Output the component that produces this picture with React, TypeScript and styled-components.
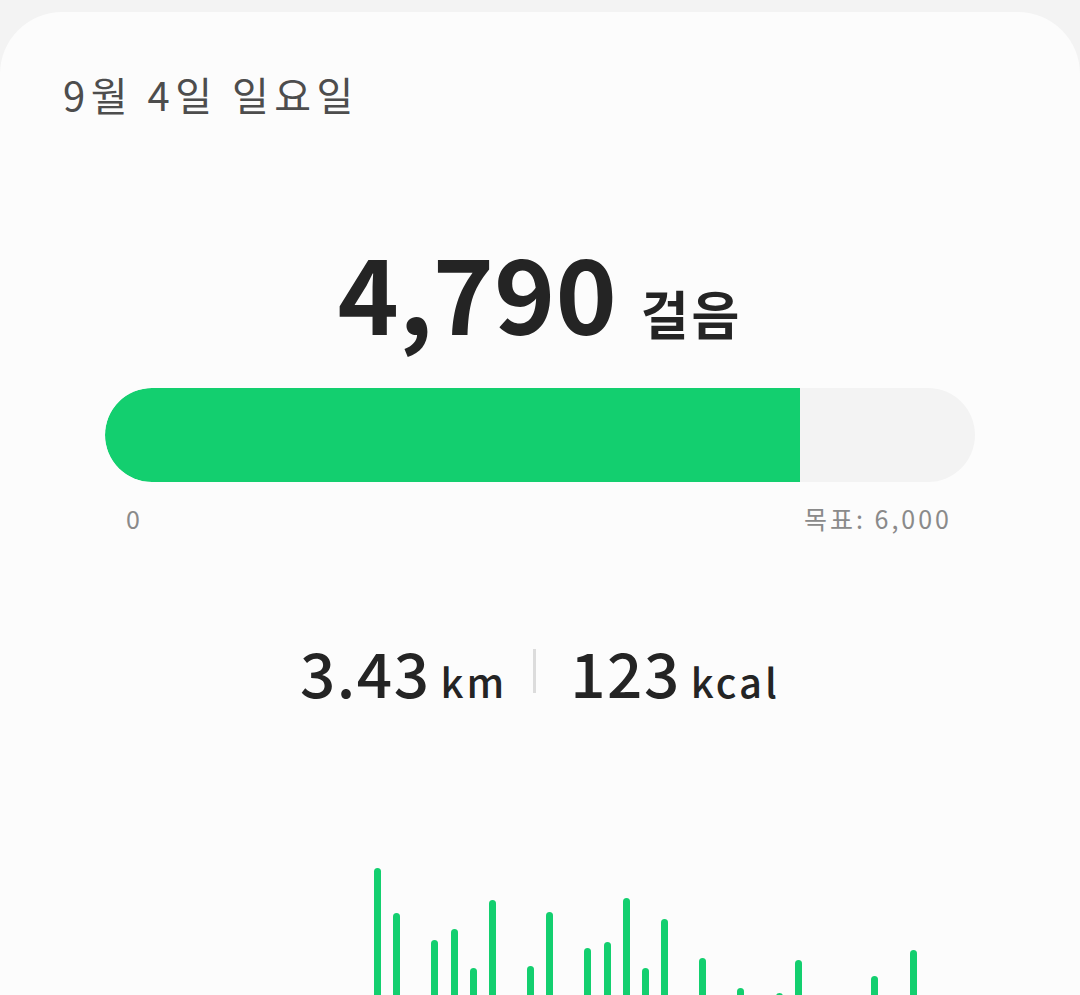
import React from "react";
import styled, { createGlobalStyle } from "styled-components";

const GlobalStyle = createGlobalStyle`
  html, body {
    margin: 0;
    padding: 0;
    background: #f3f3f3;
    overflow: hidden;
  }
  body {
    font-family: "Noto Sans CJK KR", "Noto Sans", sans-serif;
  }
`;

const Page = styled.div`
  padding-top: 12px;
  height: 995px;
  box-sizing: border-box;
  overflow: hidden;
`;

const Card = styled.section`
  background: #fcfcfc;
  border-radius: 62px 62px 0 0;
  height: 1100px;
  display: flex;
  flex-direction: column;
`;

const DateTitle = styled.h1`
  margin: 0;
  padding: 59px 63px 0;
  font-size: 40px;
  line-height: 46px;
  font-weight: 400;
  color: #4d4d4d;
  letter-spacing: 5.5px;
`;

const StepsRow = styled.div`
  margin-top: 121px;
  display: flex;
  justify-content: center;
  align-items: baseline;
  gap: 24px;
  line-height: 1;
  color: #242424;
`;

const StepsValue = styled.span`
  font-size: 104px;
  font-weight: 700;
  line-height: 1;
`;

const StepsUnit = styled.span`
  font-size: 52px;
  font-weight: 700;
  line-height: 1;
  letter-spacing: 3px;
`;

const Track = styled.div`
  margin: 46px 105px 0;
  height: 94px;
  border-radius: 47px;
  background: #f3f3f3;
  overflow: hidden;
`;

const Fill = styled.div`
  height: 100%;
  background: #13cf6f;
  border-radius: 47px 0 0 47px;
`;

const Scale = styled.div`
  margin: 21px 128px 0 126px;
  display: flex;
  justify-content: space-between;
  font-size: 25px;
  line-height: 30px;
  color: #8a8a8a;
`;

const ScaleLabel = styled.span<{ $spaced?: boolean }>`
  letter-spacing: ${(p) => (p.$spaced ? "3px" : "0")};
`;

const StatsRow = styled.div`
  margin-top: 107px;
  display: flex;
  justify-content: center;
  align-items: center;
  color: #242424;
`;

const Stat = styled.span`
  display: flex;
  align-items: baseline;
  gap: 10px;
  line-height: 1;
`;

const StatValue = styled.span`
  font-size: 62px;
  font-weight: 500;
  line-height: 1;
  letter-spacing: 1.5px;
`;

const StatUnit = styled.span`
  font-size: 40px;
  font-weight: 500;
  line-height: 1;
  letter-spacing: 3px;
`;

const Divider = styled.span`
  width: 3px;
  height: 44px;
  background: #dcdcdc;
  margin: 0 34px 0 26px;
`;

const Chart = styled.div`
  margin-top: 159px;
  margin-left: 368px;
  height: 150px;
  display: grid;
  grid-template-columns: repeat(29, 19.13px);
  align-items: end;
`;

const Slot = styled.div`
  display: flex;
  justify-content: center;
  align-items: flex-end;
  height: 100%;
`;

const Bar = styled.div`
  width: 7px;
  background: #13cf6f;
  border-radius: 3.5px 3.5px 0 0;
`;

const BOTTOM = 1010;
const tops: (number | null)[] = [
  867, 912, null, 939, 928, 967, 899, null, 965, 911, null, 947, 941, 897,
  967, 918, null, 957, null, 987, null, 992, 959, null, 994, null, 975, null,
  949,
];

export default function App() {
  const steps = 4790;
  const goal = 6000;
  const pct = (steps / goal) * 100;
  return (
    <>
      <GlobalStyle />
      <Page>
        <Card>
          <DateTitle>9월 4일 일요일</DateTitle>
          <StepsRow>
            <StepsValue>4,790</StepsValue>
            <StepsUnit>걸음</StepsUnit>
          </StepsRow>
          <Track>
            <Fill style={{ width: `${pct}%` }} />
          </Track>
          <Scale>
            <ScaleLabel>0</ScaleLabel>
            <ScaleLabel $spaced>목표: 6,000</ScaleLabel>
          </Scale>
          <StatsRow>
            <Stat>
              <StatValue>3.43</StatValue>
              <StatUnit>km</StatUnit>
            </Stat>
            <Divider />
            <Stat>
              <StatValue>123</StatValue>
              <StatUnit>kcal</StatUnit>
            </Stat>
          </StatsRow>
          <Chart>
            {tops.map((t, i) => (
              <Slot key={i}>
                {t !== null && <Bar style={{ height: `${BOTTOM - t}px` }} />}
              </Slot>
            ))}
          </Chart>
        </Card>
      </Page>
    </>
  );
}
